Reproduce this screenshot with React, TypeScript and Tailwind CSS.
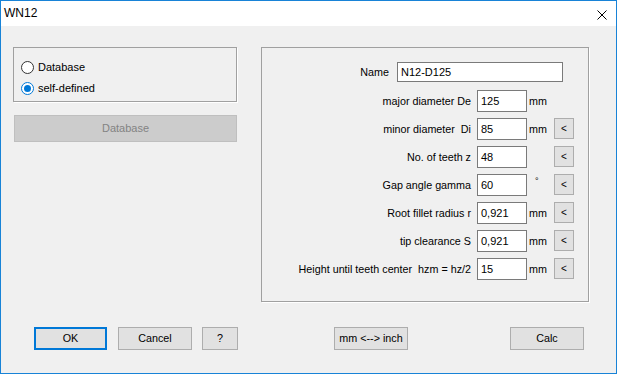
import { ReactNode } from "react";

const font = { fontFamily: '"Liberation Sans", Arial, sans-serif' };

function WinButton({
  children,
  className = "",
  primary = false,
}: {
  children: ReactNode;
  className?: string;
  primary?: boolean;
}) {
  return (
    <button
      className={
        "flex h-[23px] items-center justify-center bg-[#e1e1e1] text-[10.75px] text-black " +
        (primary ? "border-2 border-[#0078d7] " : "border border-[#adadad] ") +
        className
      }
    >
      {children}
    </button>
  );
}

function Radio({ checked, label }: { checked?: boolean; label: string }) {
  return (
    <div className="flex h-[13px] items-center">
      <span
        className={
          "flex h-[13px] w-[13px] items-center justify-center rounded-full border bg-white " +
          (checked ? "border-[#0078d7]" : "border-[#333333]")
        }
      >
        {checked && <span className="h-[7px] w-[7px] rounded-full bg-[#0078d7]" />}
      </span>
      <span className="ml-[4px] text-[11px] leading-none">{label}</span>
    </div>
  );
}

function Row({
  label,
  value,
  unit,
  arrow = true,
}: {
  label: string;
  value: string;
  unit?: string;
  arrow?: boolean;
}) {
  return (
    <div className="flex h-[22px] items-start">
      <span className="flex h-[22px] w-[209px] items-center justify-end whitespace-pre text-[10.75px]">
        {label}
      </span>
      <span className="ml-[6px] flex h-[22px] w-[50px] items-center border border-[#7a7a7a] bg-white pl-[3px] text-[11px]">
        {value}
      </span>
      <span className="flex h-[22px] w-[27px] items-center pl-[2px] text-[10.75px]">
        {unit === "°" ? <span className="ml-[6px] -mt-[6px] text-[9px]">°</span> : unit}
      </span>
      {arrow && (
        <span className="flex h-[21px] w-[20px] items-center justify-center border border-[#adadad] bg-[#e1e1e1] text-[10px]">
          &lt;
        </span>
      )}
    </div>
  );
}

export default function App() {
  return (
    <div
      style={font}
      className="flex h-[374px] w-[617px] flex-col border border-[#1883d7] bg-[#f0f0f0] text-black"
    >
      <div className="flex h-[25px] items-center justify-between bg-white pl-[3px] pr-[9px]">
        <span className="-mt-[1px] text-[12px]">WN12</span>
        <svg width="10" height="10" viewBox="0 0 10 10" className="mt-[3px]">
          <path d="M0.5 0.5 L9.5 9.5 M9.5 0.5 L0.5 9.5" stroke="#000" strokeWidth="1" />
        </svg>
      </div>

      <div className="flex pt-[21px]">
        <div className="ml-[12px] flex w-[224px] flex-col">
          <div className="flex h-[55px] flex-col gap-[8px] border border-[#a0a0a0] pl-[7px] pt-[13px] shadow-[1px_1px_0_#ffffff]">
            <Radio label="Database" />
            <Radio checked label="self-defined" />
          </div>
          <button className="ml-[1px] mt-[13px] flex h-[27px] w-[223px] items-center justify-center border border-[#bfbfbf] bg-[#cccccc] text-[11px] text-[#838383]">
            Database
          </button>
        </div>

        <div className="ml-[24px] flex h-[255px] w-[328px] flex-col border border-[#a0a0a0] pt-[14px] shadow-[1px_1px_0_#ffffff]">
          <div className="flex h-[20px] items-center">
            <span className="w-[127px] text-right text-[10.75px]">Name</span>
            <span className="ml-[8px] flex h-[20px] w-[166px] items-center border border-[#7a7a7a] bg-white pl-[3px] text-[11px]">
              N12-D125
            </span>
          </div>
          <div className="mt-[8px] flex flex-col gap-[6px]">
            <Row label="major diameter De" value="125" unit="mm" arrow={false} />
            <Row label="minor diameter  Di" value="85" unit="mm" />
            <Row label="No. of teeth z" value="48" />
            <Row label="Gap angle gamma" value="60" unit="°" />
            <Row label="Root fillet radius r" value="0,921" unit="mm" />
            <Row label="tip clearance S" value="0,921" unit="mm" />
            <Row label="Height until teeth center  hzm = hz/2" value="15" unit="mm" />
          </div>
        </div>
      </div>

      <div className="mt-[25px] flex">
        <WinButton primary className="ml-[33px] w-[73px]">OK</WinButton>
        <WinButton className="ml-[11px] w-[74px]">Cancel</WinButton>
        <WinButton className="ml-[10px] w-[36px]">?</WinButton>
        <WinButton className="ml-[96px] w-[74px]">mm &lt;--&gt; inch</WinButton>
        <WinButton className="ml-[102px] w-[74px]">Calc</WinButton>
      </div>
    </div>
  );
}
